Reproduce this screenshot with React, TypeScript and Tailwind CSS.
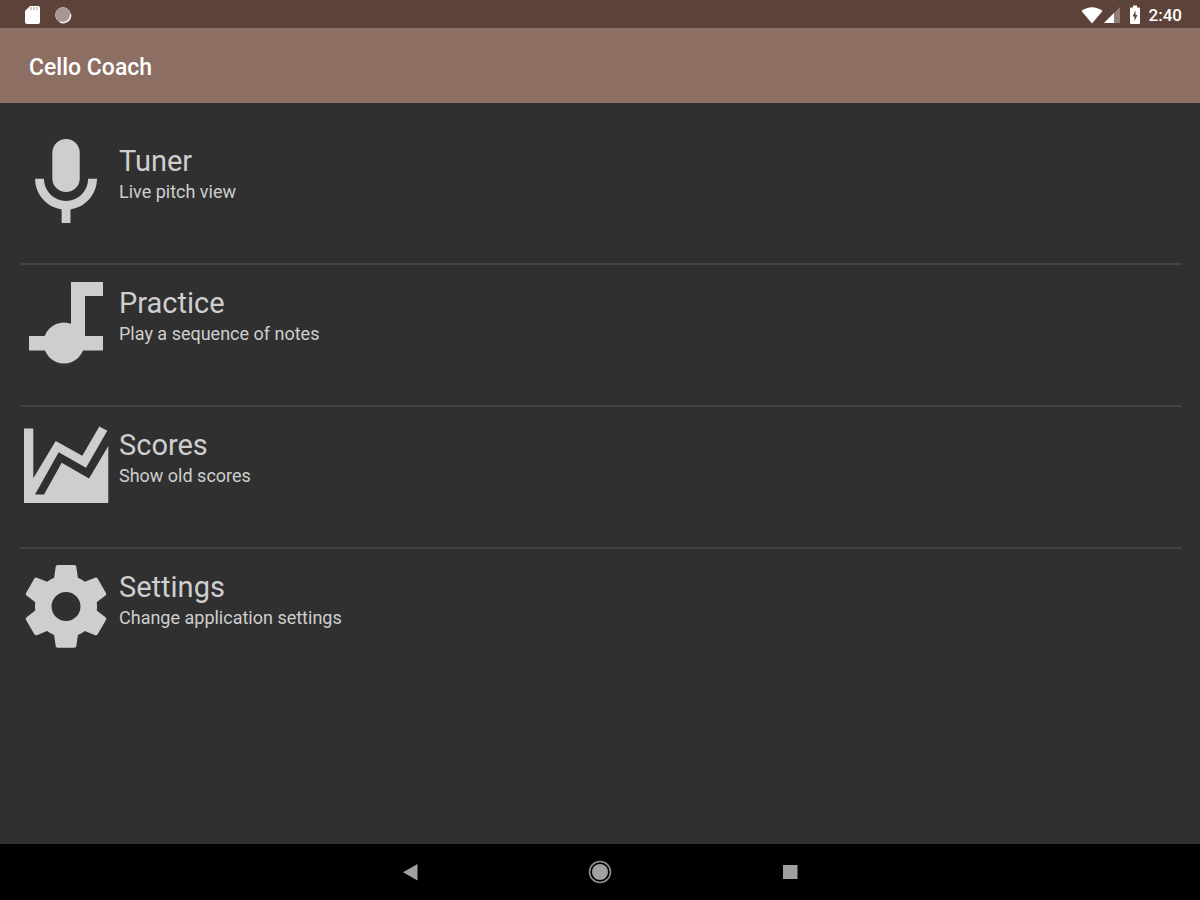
import type { ReactNode } from "react";

type MenuItem = {
  label: string;
  description: string;
  icon: ReactNode;
};

const iconClass = "size-[92px] shrink-0 fill-[#cecece]";

function MicIcon() {
  return (
    <svg viewBox="0 0 92 92" className={iconClass} aria-hidden="true">
      <path
        transform="translate(-7 -4.8) scale(4.42)"
        d="M12 2a3.1 3.1 0 0 1 3.1 3.1v5.8a3.1 3.1 0 0 1-6.2 0V5.1A3.1 3.1 0 0 1 12 2zM19 11c0 3.53-2.61 6.44-6 6.93V21h-2v-3.07C7.61 17.44 5 14.53 5 11h2a5 5 0 0 0 10 0h2z"
      />
    </svg>
  );
}

function NoteIcon() {
  return (
    <svg viewBox="0 0 92 92" className={iconClass} aria-hidden="true">
      <path d="M51 5H83V19H65V59H83V73.500H9V59H51z" />
      <circle cx="44" cy="66" r="20.500" />
    </svg>
  );
}

function ChartIcon() {
  return (
    <svg viewBox="0 0 92 92" className={iconClass} aria-hidden="true">
      <path d="M4 9.500H13.300V59.300L35.700 22L62.300 36.800L79.300 7.500L87.300 11.700L66 48.700L38.700 33.300L15 75.500H24L41.700 43.700L69 59.500L88.300 27V84H4z" />
    </svg>
  );
}

function GearIcon() {
  return (
    <svg viewBox="0 0 92 92" className={iconClass} aria-hidden="true">
      <path
        transform="translate(-3.6 -4.2) scale(4.135)"
        d="M12 15.500A3.500 3.500 0 0 1 8.500 12 3.500 3.500 0 0 1 12 8.500 3.500 3.500 0 0 1 15.500 12 3.500 3.500 0 0 1 12 15.500M19.430 12.970C19.470 12.650 19.500 12.330 19.500 12 19.500 11.670 19.470 11.340 19.430 11L21.540 9.370C21.730 9.220 21.780 8.950 21.660 8.730L19.660 5.270C19.540 5.050 19.270 4.960 19.050 5.050L16.560 6.050C16.040 5.660 15.500 5.320 14.870 5.070L14.500 2.420C14.460 2.180 14.250 2 14 2H10C9.750 2 9.540 2.180 9.500 2.420L9.130 5.070C8.500 5.320 7.960 5.660 7.440 6.050L4.950 5.050C4.730 4.960 4.460 5.050 4.340 5.270L2.340 8.730C2.210 8.950 2.270 9.220 2.460 9.370L4.570 11C4.530 11.340 4.500 11.670 4.500 12 4.500 12.330 4.530 12.650 4.570 12.970L2.460 14.630C2.270 14.780 2.210 15.050 2.340 15.270L4.340 18.730C4.460 18.950 4.730 19.030 4.950 18.950L7.440 17.940C7.960 18.340 8.500 18.680 9.130 18.930L9.500 21.580C9.540 21.820 9.750 22 10 22H14C14.250 22 14.460 21.820 14.500 21.580L14.870 18.930C15.500 18.670 16.040 18.340 16.560 17.940L19.050 18.950C19.270 19.030 19.540 18.950 19.660 18.730L21.660 15.270C21.780 15.050 21.730 14.780 21.540 14.630L19.430 12.970Z"
      />
    </svg>
  );
}

const menuItems: MenuItem[] = [
  { label: "Tuner", description: "Live pitch view", icon: <MicIcon /> },
  { label: "Practice", description: "Play a sequence of notes", icon: <NoteIcon /> },
  { label: "Scores", description: "Show old scores", icon: <ChartIcon /> },
  { label: "Settings", description: "Change application settings", icon: <GearIcon /> },
];

function StatusBar() {
  return (
    <div className="flex h-7 items-center justify-between bg-[#5d4239] pt-px pr-[18px] pl-6 text-white">
      <div className="flex items-center gap-3">
        {/* SD card */}
        <svg viewBox="0 0 18 20" className="h-5 w-[18px]" aria-hidden="true">
          <path d="M6 1H14Q16 1 16 3V17Q16 19 14 19H3Q1 19 1 17V6z" fill="#fff" />
          <path d="M7 2V5M10 2V5M13 2V5" stroke="#c4b6b1" strokeWidth="1.500" />
        </svg>
        {/* Sync indicator */}
        <svg viewBox="0 0 18 18" className="size-[18px]" aria-hidden="true">
          <circle cx="9" cy="9" r="7.500" fill="#a79791" stroke="#bdb0ab" />
          <path d="M16.500 8A7.500 7.500 0 0 1 6 16" fill="none" stroke="#f1eeec" strokeWidth="1.500" />
        </svg>
      </div>
      <div className="flex items-center">
        <svg viewBox="0 0 22 18" className="h-[18px] w-[22px]" aria-hidden="true">
          <path d="M0.500 5Q11 -2.500 21.500 5L11 17.500z" fill="#fff" />
        </svg>
        <svg viewBox="0 0 18 18" className="size-[18px]" aria-hidden="true">
          <path d="M17 1V17H1z" fill="#917d76" />
          <path d="M11 7V17H1z" fill="#fff" />
        </svg>
        <svg viewBox="0 0 12 20" className="ml-2 h-5 w-3" aria-hidden="true">
          <path d="M4 0.500H8V2.500H10Q11 2.500 11 3.500V18Q11 19 10 19H2Q1 19 1 18V3.500Q1 2.500 2 2.500H4z" fill="#fff" />
          <path d="M6.500 5.500L3.500 11.500H5.500V16L8.500 10H6.500z" fill="#5d4239" />
        </svg>
        <span className="ml-2 text-[17px] leading-5 font-medium">2:40</span>
      </div>
    </div>
  );
}

function NavigationBar() {
  return (
    <nav className="flex h-14 justify-center bg-black">
      <button type="button" aria-label="Back" className="flex w-[190px] items-center justify-center">
        <svg viewBox="0 0 24 24" className="size-6" aria-hidden="true">
          <path d="M19.500 4V20.500L5 12.250z" fill="#a0a0a0" />
        </svg>
      </button>
      <button type="button" aria-label="Home" className="flex w-[190px] items-center justify-center">
        <svg viewBox="0 0 24 24" className="size-6" aria-hidden="true">
          <circle cx="12" cy="12" r="8" fill="#a0a0a0" />
          <circle cx="12" cy="12" r="10.500" fill="none" stroke="#8c8c8c" strokeWidth="1.600" />
        </svg>
      </button>
      <button type="button" aria-label="Overview" className="flex w-[190px] items-center justify-center">
        <svg viewBox="0 0 24 24" className="size-6" aria-hidden="true">
          <rect x="5" y="5" width="14.500" height="14" fill="#a0a0a0" />
        </svg>
      </button>
    </nav>
  );
}

export default function App() {
  return (
    <div className="flex min-h-screen flex-col bg-[#303030] font-[Roboto,sans-serif]">
      <StatusBar />
      <header className="flex h-[75px] items-center bg-[#8d6e63] px-[29px] pt-1">
        <h1 className="text-[23px] leading-7 font-medium text-white">Cello Coach</h1>
      </header>

      <main className="flex-1 pt-5 pr-[18px] pl-5">
        <ul className="divide-y-2 divide-[#434343]">
          {menuItems.map((item) => (
            <li key={item.label}>
              <button type="button" className="flex w-full gap-[7px] pt-3 pb-9 text-left">
                {item.icon}
                <span className="flex flex-col pt-2 text-[#cecece]">
                  <span className="text-[29px] leading-9">{item.label}</span>
                  <span className="text-[18px] leading-[26px]">{item.description}</span>
                </span>
              </button>
            </li>
          ))}
        </ul>
      </main>

      <NavigationBar />
    </div>
  );
}
